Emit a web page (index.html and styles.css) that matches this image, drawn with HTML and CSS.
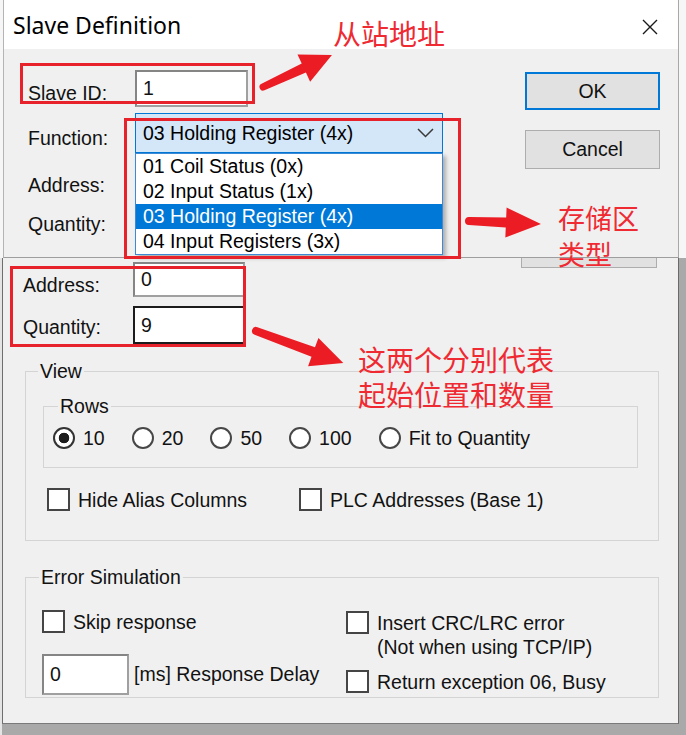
FILE: index.html
```html
<!DOCTYPE html>
<html>
<head>
<meta charset="utf-8">
<link rel="stylesheet" href="styles.css">
</head>
<body>
<div class="page">

    <div class="shot-top">
        <div class="dlg-top">
            <div class="titlebar">
                <span class="title">Slave Definition</span>
                <svg class="close" viewBox="0 0 16 16"><path d="M1 1 L15 15 M15 1 L1 15"/></svg>
            </div>
            <div class="body-top">
                <div class="form">
                    <div class="row r-id">
                        <span class="lbl">Slave ID:</span>
                        <div class="edit e-id">1</div>
                    </div>
                    <div class="row r-fn">
                        <span class="lbl">Function:</span>
                        <div class="combo">
                            <span>03 Holding Register (4x)</span>
                            <svg class="chev" viewBox="0 0 17 10"><polyline points="1,1 8.5,8.5 16,1"/></svg>
                        </div>
                    </div>
                    <div class="row r-addr"><span class="lbl">Address:</span></div>
                    <div class="row r-qty"><span class="lbl">Quantity:</span></div>
                </div>
                <div class="btns">
                    <button class="btn btn-ok">OK</button>
                    <button class="btn btn-cancel">Cancel</button>
                </div>
            </div>
        </div>
    </div>

    <div class="shot-low">
        <div class="dlg-low">
            <div class="low-top">
                <div class="form form-low">
                    <div class="row r-a">
                        <span class="lbl">Address:</span>
                        <div class="edit e-a">0</div>
                    </div>
                    <div class="row r-q">
                        <span class="lbl">Quantity:</span>
                        <div class="edit e-q">9</div>
                    </div>
                </div>
                <div class="btn-stub"></div>
            </div>

            <fieldset class="group g-view">
                <legend>View</legend>
                <fieldset class="group g-rows">
                    <legend>Rows</legend>
                    <div class="radios">
                        <label class="radio on"><span class="dot"></span>10</label>
                        <label class="radio"><span class="dot"></span>20</label>
                        <label class="radio"><span class="dot"></span>50</label>
                        <label class="radio"><span class="dot"></span>100</label>
                        <label class="radio"><span class="dot"></span>Fit to Quantity</label>
                    </div>
                </fieldset>
                <div class="checks">
                    <label class="check"><span class="box"></span>Hide Alias Columns</label>
                    <label class="check"><span class="box"></span>PLC Addresses (Base 1)</label>
                </div>
            </fieldset>

            <fieldset class="group g-err">
                <legend>Error Simulation</legend>
                <div class="err-grid">
                    <div class="err-left">
                        <label class="check"><span class="box"></span>Skip response</label>
                        <div class="delay">
                            <div class="edit e-delay">0</div>
                            <span>[ms] Response Delay</span>
                        </div>
                    </div>
                    <div class="err-right">
                        <label class="check crc"><span class="box"></span><span class="lines">Insert CRC/LRC error<br>(Not when using TCP/IP)</span></label>
                        <label class="check ret"><span class="box"></span>Return exception 06, Busy</label>
                    </div>
                </div>
            </fieldset>
        </div>
    </div>

    <!-- open combo list of the upper dialog -->
    <ul class="droplist">
        <li>01 Coil Status (0x)</li>
        <li>02 Input Status (1x)</li>
        <li class="sel">03 Holding Register (4x)</li>
        <li>04 Input Registers (3x)</li>
    </ul>

    <!-- red annotations -->
    <div class="mark m-id"></div>
    <div class="mark m-fn"></div>
    <div class="mark m-aq"></div>

    <svg class="arrows" width="686" height="735" viewBox="0 0 686 735">
        <g transform="translate(263 87) rotate(-24.9)"><path d="M0 -3.5 L45 -5 L45 -15 L76 0 L45 15 L45 5 L0 3.5 A3.5 3.5 0 0 1 0 -3.5 Z"/></g>
        <g transform="translate(469 221) rotate(2.4)"><path d="M0 -4 L37 -5 L37 -15 L72 0 L37 15 L37 5 L0 4 A4 4 0 0 1 0 -4 Z"/></g>
        <g transform="translate(256 331) rotate(20.2)"><path d="M0 -4 L61 -5 L61 -15 L93 0 L61 15 L61 5 L0 4 A4 4 0 0 1 0 -4 Z"/></g>
    </svg>

    <div class="note n-id">从站地址</div>
    <div class="note n-fn">存储区<br>类型</div>
    <div class="note n-aq">这两个分别代表<br>起始位置和数量</div>

</div>
</body>
</html>
```

FILE: styles.css
```css
* {
    box-sizing: border-box;
}

body {
    margin: 0;
    background-color: #a9a9a9;
}

.page {
    position: relative;
    width: 686px;
    height: 735px;
    overflow: hidden;
    font-family: "Liberation Sans", Arial, sans-serif;
    font-size: 19.5px;
    color: #121212;
}

/* upper screenshot */

.shot-top {
    height: 258px;
    background-color: #f6f6f6;
}

.dlg-top {
    margin-left: 3px;
    width: 676px;
    height: 258px;
    border-left: 1px solid #b4b4b4;
    border-right: 1px solid #a8a8a8;
    border-bottom: 1px solid #9e9e9e;
    background-color: #f0f0f0;
}

.titlebar {
    height: 49px;
    display: flex;
    align-items: center;
    justify-content: space-between;
    padding: 0 20px 0 9px;
    background-color: #fff;
}

.title {
    font-family: "Noto Sans", sans-serif;
    font-size: 23px;
    color: #000;
}

.close {
    width: 16px;
    height: 16px;
    margin-top: 5px;
    stroke: #1a1a1a;
    stroke-width: 1.4;
    fill: none;
}

.body-top {
    display: flex;
    padding: 21px 18px 0 24px;
}

.form {
    display: flex;
    flex-direction: column;
}

.row {
    display: flex;
    align-items: flex-start;
}

.lbl {
    width: 107px;
    line-height: 22px;
    padding-top: 12px;
}

.r-fn {
    margin-top: 6px;
}

.r-fn .lbl {
    padding-top: 14px;
}

.r-addr {
    margin-top: 21px;
}

.r-qty {
    margin-top: 17px;
}

.r-addr .lbl,
.r-qty .lbl {
    padding-top: 0;
}

.edit {
    display: flex;
    align-items: center;
    padding-left: 6px;
    border: 2px solid #a0a0a0;
    border-top-color: #858585;
    border-left-color: #858585;
    background-color: #fff;
}

.e-id {
    width: 113px;
    height: 37px;
}

.combo {
    width: 308px;
    height: 40px;
    display: flex;
    align-items: center;
    justify-content: space-between;
    padding: 0 8px 0 7px;
    border: 1px solid #0078d7;
    background-color: #d4e7f8;
    color: #000;
}

.chev {
    width: 17px;
    height: 10px;
    fill: none;
    stroke: #3a3a3a;
    stroke-width: 1.5;
}

.btns {
    margin-left: auto;
    padding-top: 2px;
    display: flex;
    flex-direction: column;
    gap: 20px;
}

.btn {
    width: 135px;
    height: 38px;
    padding: 0;
    font: inherit;
    color: #111;
    background-color: #e1e1e1;
    border: 1px solid #adadad;
}

.btn-ok {
    border: 2px solid #0078d7;
}

.btn-cancel {
    height: 39px;
}

/* lower screenshot */

.shot-low {
    height: 477px;
    background: linear-gradient(to right, #e4e4e4 2px, #a9a9a9 2px);
}

.dlg-low {
    margin-left: 2px;
    width: 677px;
    height: 466px;
    border-left: 1px solid #6e6e6e;
    border-right: 1px solid #6a6a6a;
    border-bottom: 1px solid #7a7a7a;
    background-color: #f0f0f0;
}

.low-top {
    display: flex;
    align-items: flex-start;
}

.form-low {
    padding: 4px 0 0 20px;
}

.form-low .lbl {
    width: 110px;
}

.r-q {
    margin-top: 9px;
}

.form-low .r-q .lbl {
    padding-top: 10px;
}

.e-a {
    width: 112px;
    height: 35px;
}

.e-q {
    width: 112px;
    height: 38px;
    border-color: #1c1c1c;
}

.btn-stub {
    margin-left: auto;
    margin-right: 21px;
    width: 136px;
    height: 10px;
    border: 1px solid #adadad;
    border-top: 0;
    background-color: #e1e1e1;
}

.group {
    margin: 0;
    padding: 0;
    min-width: 0;
    border: 1px solid #d4d4d4;
}

.group legend {
    padding: 0 2px;
    margin-left: 12px;
    line-height: 20px;
}

.g-view {
    width: 634px;
    margin: 17px 0 0 22px;
    padding-bottom: 29px;
}

.g-rows {
    width: 595px;
    margin: 15px 0 0 17px;
    padding: 11px 0 18px 9px;
}

.g-rows legend {
    margin-left: 5px;
}

.radios {
    display: flex;
    gap: 27px;
}

.radio {
    display: flex;
    align-items: center;
    gap: 8px;
    line-height: 22px;
}

.dot {
    width: 22px;
    height: 22px;
    border-radius: 50%;
    border: 2px solid #474747;
    background-color: #fff;
}

.radio.on .dot {
    border-color: #333;
    background: radial-gradient(circle, #1c1c1c 0 5px, #fff 5.6px);
}

.checks {
    display: grid;
    grid-template-columns: 252px auto;
    margin: 20px 0 0 21px;
}

.check {
    display: flex;
    align-items: center;
    gap: 8px;
    line-height: 22px;
}

.box {
    flex: none;
    width: 23px;
    height: 23px;
    border: 2px solid #454545;
    background-color: #fff;
}

.g-err {
    width: 634px;
    margin: 26px 0 0 22px;
    padding: 23px 0 2px 16px;
}

.g-err legend {
    margin-left: -3px;
}

.err-grid {
    display: grid;
    grid-template-columns: 304px auto;
}

.delay {
    display: flex;
    align-items: center;
    gap: 5px;
    margin-top: 21px;
}

.e-delay {
    width: 87px;
    height: 41px;
}

.crc {
    align-items: flex-start;
    margin-top: 1px;
}

.lines {
    line-height: 24px;
}

.ret {
    margin-top: 11px;
}

/* combo list, opened over the upper form */

.droplist {
    position: absolute;
    left: 135px;
    top: 153px;
    width: 308px;
    height: 102px;
    margin: 0;
    padding: 0;
    list-style: none;
    background-color: #fff;
    border: 1px solid #3c8ad6;
    box-shadow: 3px 3px 4px rgba(0, 0, 0, 0.28);
    color: #000;
}

.droplist li {
    height: 25px;
    line-height: 25px;
    padding-left: 7px;
}

.droplist li.sel {
    background-color: #0078d7;
    color: #fff;
}

/* annotations */

.mark {
    position: absolute;
    border: 3px solid #e8222a;
}

.m-id {
    left: 20px;
    top: 63px;
    width: 235px;
    height: 41px;
}

.m-fn {
    left: 124px;
    top: 118px;
    width: 337px;
    height: 141px;
}

.m-aq {
    left: 10px;
    top: 266px;
    width: 236px;
    height: 81px;
}

.arrows {
    position: absolute;
    left: 0;
    top: 0;
    fill: #ec1c24;
}

.note {
    position: absolute;
    white-space: nowrap;
    color: #ef2a32;
    font-family: "Noto Sans CJK SC", sans-serif;
}

.n-id {
    left: 333px;
    top: 19px;
    font-size: 28px;
    line-height: 28px;
}

.n-fn {
    left: 558px;
    top: 200px;
    font-size: 27px;
    line-height: 36px;
}

.n-aq {
    left: 358px;
    top: 342px;
    font-size: 28px;
    line-height: 35px;
}
```
